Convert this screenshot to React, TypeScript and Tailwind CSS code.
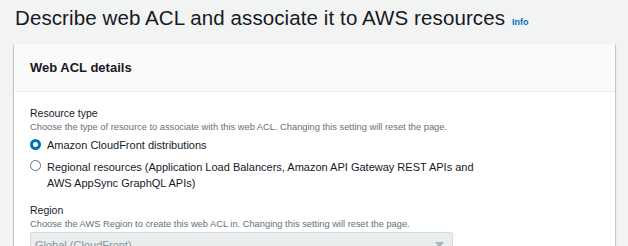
export default function App() {
  return (
    <div className="w-[628px] h-[246px] overflow-hidden bg-[#f2f3f3] font-['Liberation_Sans',Arial,sans-serif] text-[#16191f]">
      <div className="flex items-baseline pl-[15px] pt-[4px] h-[44px]">
        <h1 className="text-[20.5px] leading-[28px] font-normal tracking-[0.1px]">
          Describe web ACL and associate it to AWS resources
        </h1>
        <a className="ml-[7px] text-[9px] font-bold text-[#0073bb]">Info</a>
      </div>
      <div className="ml-[14px] w-[601px] bg-white shadow-[0_1px_1px_0_rgba(0,28,36,0.3),1px_1px_1px_0_rgba(0,28,36,0.15),-1px_1px_1px_0_rgba(0,28,36,0.15)]">
        <div className="h-[48px] flex items-center px-[16px] bg-[#fafafa] border-b border-[#eaeded]">
          <h2 className="text-[13px] font-bold">Web ACL details</h2>
        </div>
        <div className="px-[16px] pt-[14px]">
          <div className="text-[10.5px] leading-[14px]">Resource type</div>
          <div className="text-[9.3px] leading-[14px] text-[#687078]">
            Choose the type of resource to associate with this web ACL. Changing this setting will reset the page.
          </div>
          <div className="mt-[4px] flex items-start gap-[6px]">
            <span className="mt-[1px] w-[11px] h-[11px] rounded-full border-[3.5px] border-[#0073bb] bg-white shrink-0" />
            <span className="text-[11px] leading-[14px]">Amazon CloudFront distributions</span>
          </div>
          <div className="mt-[7px] flex items-start gap-[6px]">
            <span className="mt-[1px] w-[11px] h-[11px] rounded-full border border-[#687078] bg-white shrink-0" />
            <span className="text-[11px] leading-[16px] w-[435px]">
              Regional resources (Application Load Balancers, Amazon API Gateway REST APIs and AWS AppSync GraphQL APIs)
            </span>
          </div>
          <div className="mt-[12px] text-[10.5px] leading-[14px]">Region</div>
          <div className="text-[9.3px] leading-[14px] text-[#687078]">
            Choose the AWS Region to create this web ACL in. Changing this setting will reset the page.
          </div>
          <div className="mt-[1px] w-[423px] h-[26px] bg-[#eaeded] border border-[#d5dbdb] rounded-[2px] flex items-center justify-between pl-[4px] pr-[8px]">
            <span className="text-[11px] text-[#879596]">Global (CloudFront)</span>
            <svg width="9" height="6" viewBox="0 0 9 6"><path d="M0 0h9L4.5 6z" fill="#aab7b8" /></svg>
          </div>
        </div>
      </div>
    </div>
  );
}
